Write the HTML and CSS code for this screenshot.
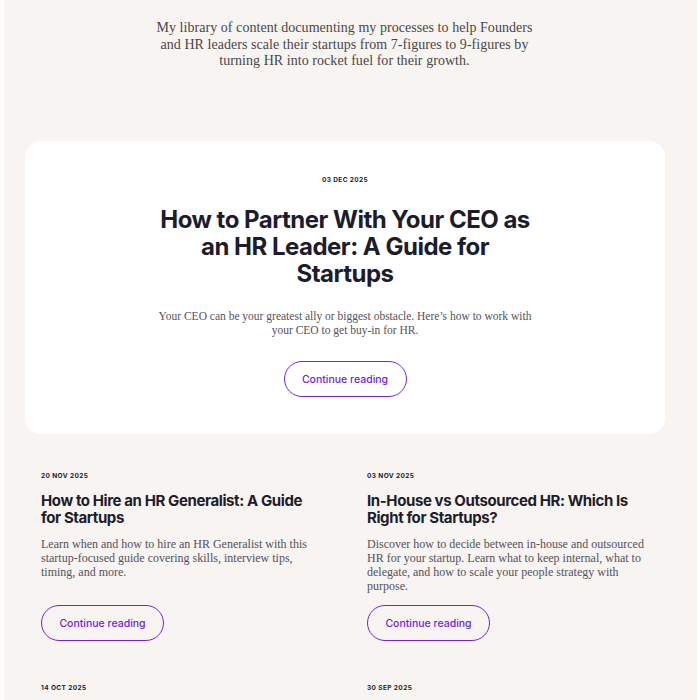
FILE: index.html
```html
<!DOCTYPE html>
<html lang="en">
<head>
<meta charset="utf-8">
<title>Library</title>
<link rel="stylesheet" href="styles.css">
</head>
<body>
<main class="page">
  <p class="intro">My library of content documenting my processes to help Founders and HR leaders scale their startups from 7-figures to 9-figures by turning HR into rocket fuel for their growth.</p>

  <article class="featured">
    <div class="date">03 Dec 2025</div>
    <h1 class="featured-title">How to Partner With Your CEO as an HR Leader: A Guide for Startups</h1>
    <p class="featured-excerpt">Your CEO can be your greatest ally or biggest obstacle. Here’s how to work with your CEO to get buy-in for HR.</p>
    <a class="btn" href="#">Continue reading</a>
  </article>

  <section class="grid">
    <article class="post">
      <div class="date">20 Nov 2025</div>
      <h2 class="post-title">How to Hire an HR Generalist: A Guide for Startups</h2>
      <p class="post-excerpt">Learn when and how to hire an HR Generalist with this startup-focused guide covering skills, interview tips, timing, and more.</p>
      <a class="btn" href="#">Continue reading</a>
    </article>
    <article class="post">
      <div class="date">03 Nov 2025</div>
      <h2 class="post-title">In-House vs Outsourced HR: Which Is Right for Startups?</h2>
      <p class="post-excerpt">Discover how to decide between in-house and outsourced HR for your startup. Learn what to keep internal, what to delegate, and how to scale your people strategy with purpose.</p>
      <a class="btn" href="#">Continue reading</a>
    </article>
    <article class="post">
      <div class="date">14 Oct 2025</div>
    </article>
    <article class="post">
      <div class="date">30 Sep 2025</div>
    </article>
  </section>
</main>
</body>
</html>
```

FILE: styles.css
```css
html, body {
  margin: 0;
  padding: 0;
  background: #ffffff;
}

.page {
  margin: 0 3px 0 4px;
  background: #f7f4f1;
  padding: 20px 0 40px;
  min-height: 700px;
}

.intro {
  margin: 0 auto;
  width: 386px;
  text-align: center;
  font-family: "Liberation Serif", serif;
  font-size: 14px;
  line-height: 16.5px;
  letter-spacing: 0.05px;
  color: #4a4748;
  position: relative;
  left: -6px;
}

.featured {
  margin: 71px 0 0 21px;
  width: 640px;
  box-sizing: border-box;
  background: #ffffff;
  border-radius: 16px;
  padding: 34px 0 37px;
  display: flex;
  flex-direction: column;
  align-items: center;
  text-align: center;
}

.date {
  font-family: Inter, "Liberation Sans", sans-serif;
  font-weight: 700;
  font-size: 6.5px;
  line-height: 10px;
  letter-spacing: 0.4px;
  text-transform: uppercase;
  color: #1d1c2b;
}

.featured-title {
  margin: 21px 0 0;
  max-width: 380px;
  font-family: Inter, "Liberation Sans", sans-serif;
  font-weight: 700;
  font-size: 24px;
  line-height: 27px;
  letter-spacing: -0.5px;
  color: #1d1c2b;
}

.featured-excerpt {
  margin: 22px 0 0;
  max-width: 382px;
  font-family: "Liberation Serif", serif;
  font-size: 11.5px;
  line-height: 14.3px;
  color: #55525a;
}

.btn {
  display: inline-flex;
  align-items: center;
  justify-content: center;
  box-sizing: border-box;
  width: 123px;
  height: 36px;
  border: 1px solid #7323e0;
  border-radius: 18px;
  font-family: Inter, "Liberation Sans", sans-serif;
  font-weight: 500;
  font-size: 10.5px;
  color: #7323e0;
  text-decoration: none;
}

.featured .btn {
  margin-top: 24px;
}

.grid {
  display: grid;
  grid-template-columns: 282px 282px;
  column-gap: 44px;
  row-gap: 42px;
  padding: 37px 0 0 37px;
}

.post {
  display: flex;
  flex-direction: column;
  align-items: flex-start;
}

.post-title {
  margin: 12px 0 0;
  font-family: Inter, "Liberation Sans", sans-serif;
  font-weight: 700;
  font-size: 15px;
  line-height: 16.5px;
  letter-spacing: -0.4px;
  color: #1d1c2b;
}

.post-excerpt {
  margin: 11px 0 12px;
  font-family: "Liberation Serif", serif;
  font-size: 12px;
  line-height: 14px;
  color: #55525a;
}

.post .btn {
  margin-top: auto;
}
```
